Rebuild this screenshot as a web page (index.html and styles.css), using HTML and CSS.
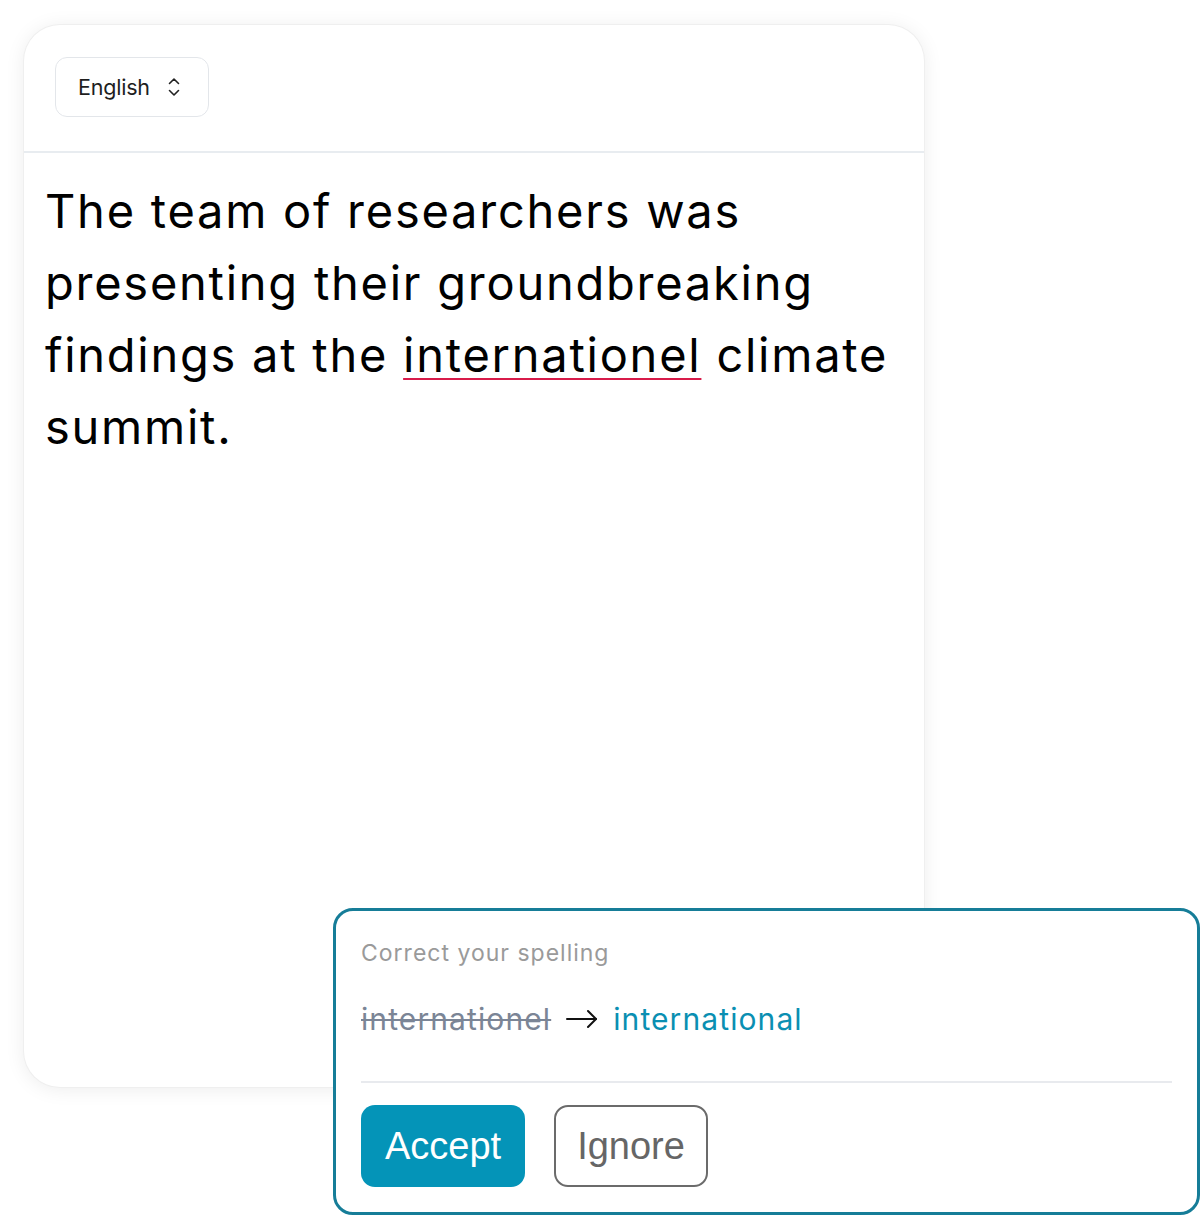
FILE: index.html
```html
<!DOCTYPE html>
<html lang="en">
<head>
<meta charset="utf-8">
<title>Spelling</title>
<link rel="stylesheet" href="styles.css">
</head>
<body>
<div class="stage">
  <div class="card">
    <div class="card-head">
      <div class="select">
        <span class="select-label">English</span>
        <svg class="select-icon" width="14" height="22" viewBox="0 0 14 22" fill="none" stroke="#222" stroke-width="1.6" stroke-linecap="round" stroke-linejoin="round">
          <path d="M2.5 7.5 L7 3 L11.5 7.5"/>
          <path d="M2.5 14.5 L7 19 L11.5 14.5"/>
        </svg>
      </div>
    </div>
    <div class="card-body">
      <p class="text">The team of researchers was presenting their groundbreaking findings at the <span class="misspelled">internationel</span> climate summit.</p>
    </div>
  </div>
  <div class="popup">
    <div class="popup-title">Correct your spelling</div>
    <div class="suggestion">
      <span class="wrong">internationel</span>
      <svg class="arrow" width="34" height="20" viewBox="0 0 34 20" fill="none" stroke="#111" stroke-width="2" stroke-linecap="round" stroke-linejoin="round">
        <path d="M2 10 H31"/>
        <path d="M23 2 L31 10 L23 18"/>
      </svg>
      <span class="right">international</span>
    </div>
    <div class="popup-divider"></div>
    <div class="actions">
      <button class="btn btn-accept">Accept</button>
      <button class="btn btn-ignore">Ignore</button>
    </div>
  </div>
</div>
</body>
</html>
```
FILE: styles.css
```css
html, body {
  margin: 0;
  padding: 0;
  background: #ffffff;
}
.stage {
  position: relative;
  width: 1200px;
  height: 1215px;
  padding: 25px 0 0 24px;
  box-sizing: border-box;
}
.card {
  width: 900px;
  height: 1062px;
  background: #fff;
  border-radius: 36px;
  box-shadow: 0 0 0 1px #efefef, 0 2px 20px rgba(0, 0, 0, 0.08);
  display: flex;
  flex-direction: column;
  overflow: hidden;
}
.card-head {
  height: 128px;
  border-bottom: 2px solid #e8ecf0;
  box-sizing: border-box;
  padding: 32px 0 0 31px;
}
.select {
  width: 154px;
  height: 60px;
  box-sizing: border-box;
  border: 1px solid #e3e6ea;
  border-radius: 12px;
  display: flex;
  align-items: center;
  padding-left: 22px;
  gap: 17px;
}
.select-label {
  font-family: "Inter", "DejaVu Sans", sans-serif;
  font-size: 21.5px;
  color: #1e1e1e;
  letter-spacing: -0.2px;
}
.select-icon {
  display: block;
}
.card-body {
  padding: 22px 21px 0 21px;
}
.text {
  margin: 0;
  font-family: "Inter", "DejaVu Sans", sans-serif;
  font-size: 47px;
  line-height: 72px;
  color: #000;
  letter-spacing: 1.75px;
}
.misspelled {
  text-decoration: underline;
  text-decoration-color: #d81b4a;
  text-decoration-thickness: 2px;
  text-underline-offset: 6px;
}
.popup {
  position: absolute;
  left: 333px;
  top: 908px;
  width: 867px;
  height: 307px;
  box-sizing: border-box;
  border: 3px solid #167d98;
  border-radius: 20px;
  background: #fff;
  padding: 24px 25px 0 25px;
}
.popup-title {
  font-family: "Inter", "DejaVu Sans", sans-serif;
  font-size: 23px;
  line-height: 36px;
  color: #9a9a9a;
  letter-spacing: 1px;
}
.suggestion {
  margin-top: 28px;
  display: flex;
  align-items: center;
  gap: 14px;
  font-family: "Inter", "DejaVu Sans", sans-serif;
  font-size: 30px;
  line-height: 40px;
  letter-spacing: 1.1px;
}
.wrong {
  color: #7b8596;
  text-decoration: line-through;
  text-decoration-thickness: 2px;
}
.right {
  color: #0a8fb2;
}
.arrow {
  display: block;
}
.popup-divider {
  margin-top: 42px;
  height: 2px;
  background: #e8eaee;
}
.actions {
  margin-top: 22px;
  display: flex;
  gap: 29px;
}
.btn {
  height: 82px;
  box-sizing: border-box;
  border-radius: 14px;
  font-family: "Liberation Sans", Arial, sans-serif;
  font-size: 38px;
  padding: 0;
  cursor: pointer;
}
.btn-accept {
  width: 164px;
  background: #0494b8;
  border: none;
  color: #fff;
}
.btn-ignore {
  width: 154px;
  background: #fff;
  border: 2px solid #6b6b6b;
  color: #666;
}
```
